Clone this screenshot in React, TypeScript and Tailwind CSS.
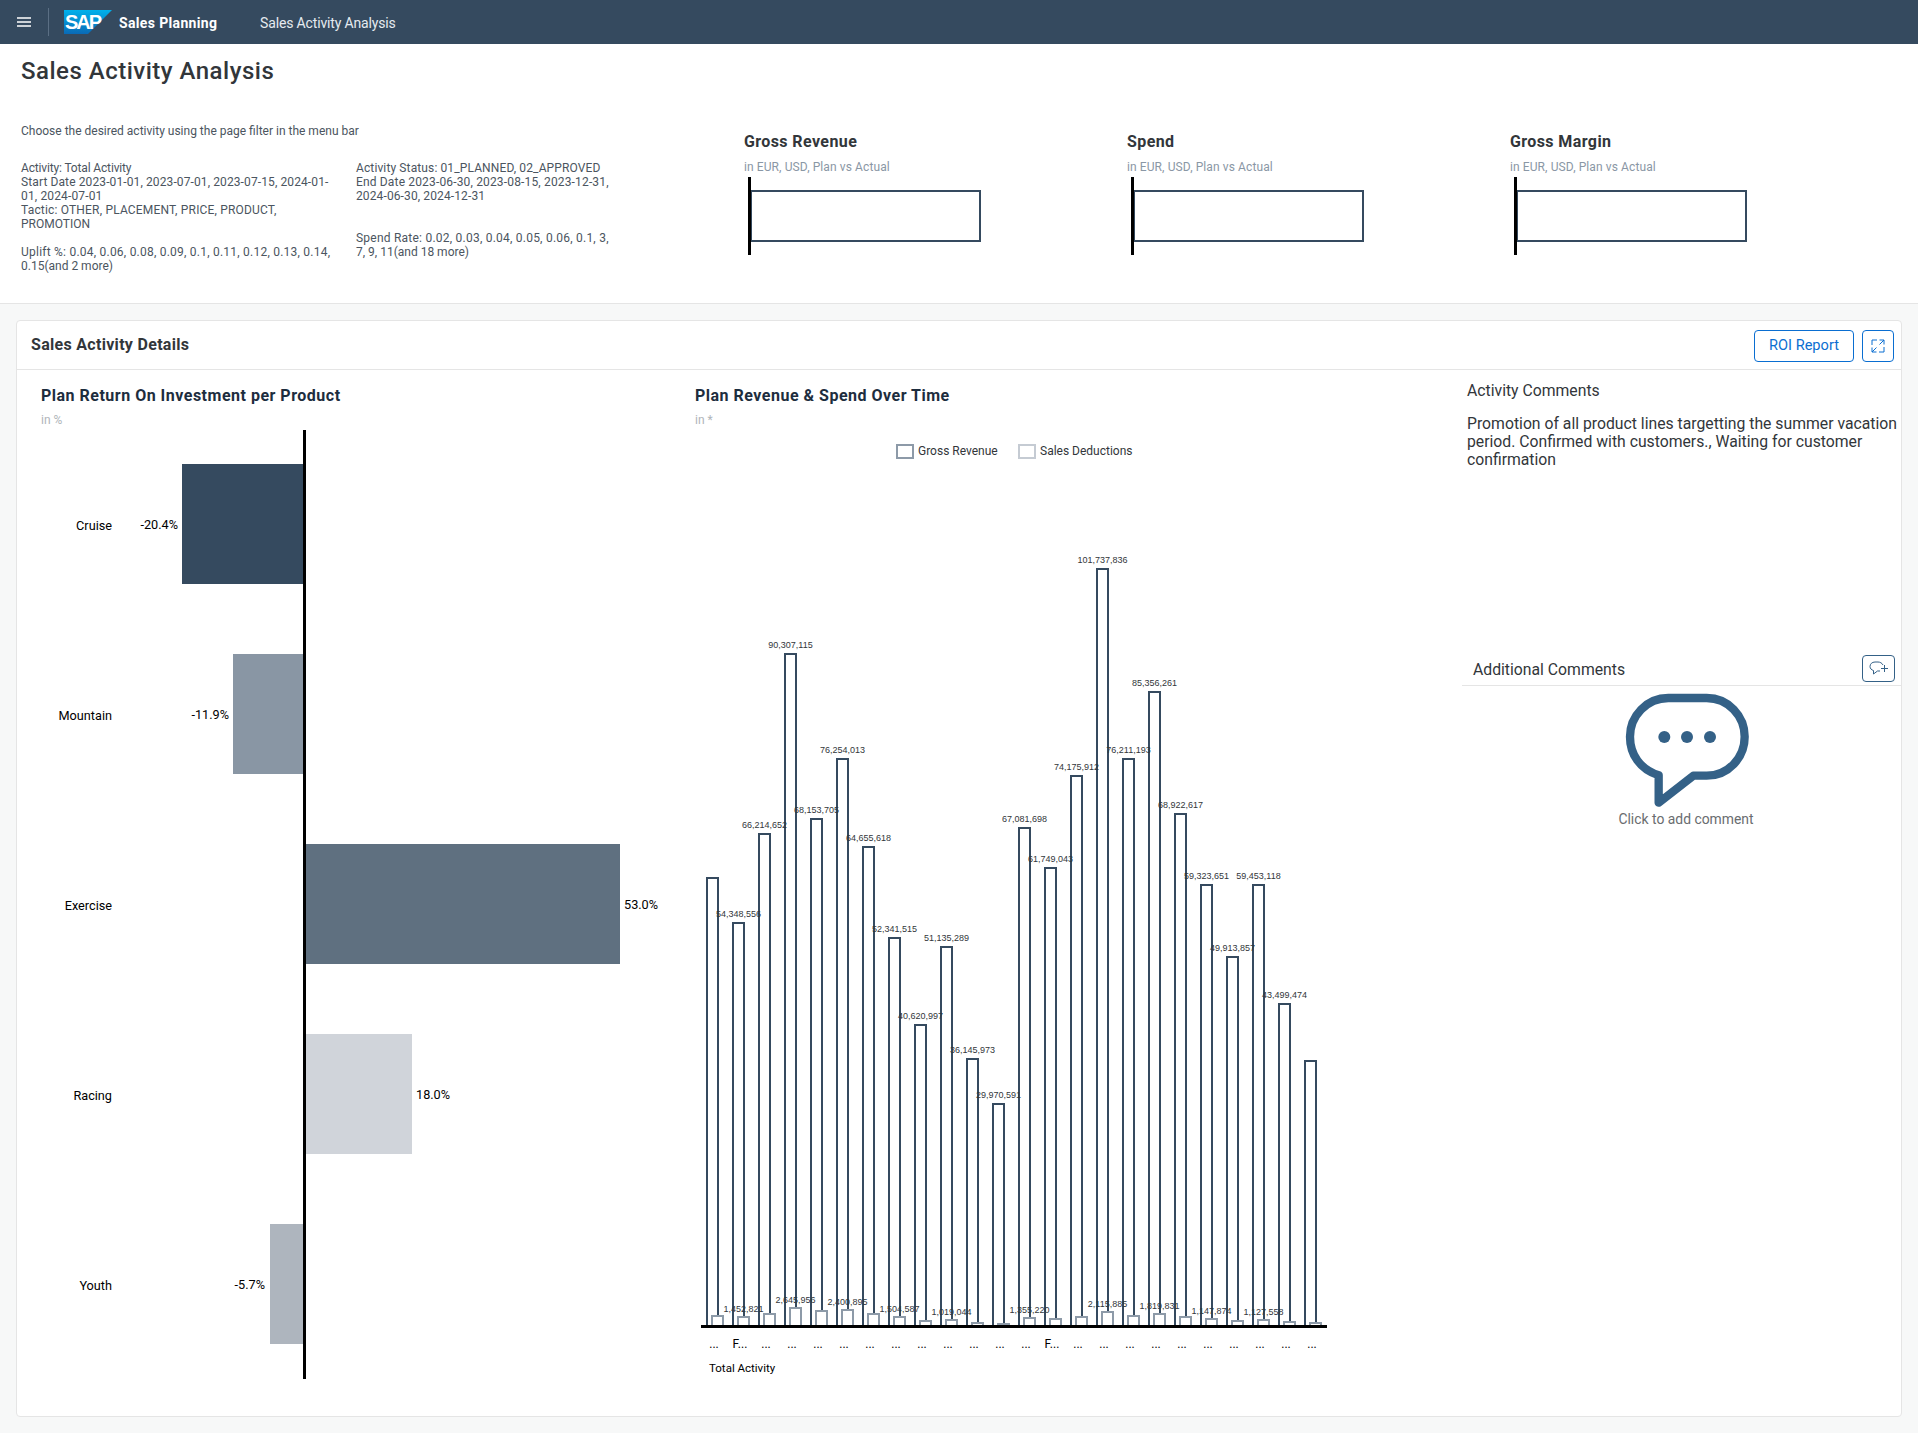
import React from "react";

const big = [877, 922, 833, 653, 818, 758, 846, 937, 1024, 946, 1058, 1103, 827, 867, 775, 568, 758, 691, 813, 884, 956, 884, 1003, 1060];
const small = [1315, 1316, 1313, 1307, 1310, 1309, 1313, 1316, 1320, 1319, 1322, 1323, 1317, 1318, 1316, 1311, 1315, 1313, 1316, 1318, 1320, 1319, 1321, 1322];
const bigLabels: (string | null)[] = [null, "54,348,556", "66,214,652", "90,307,115", "68,153,705", "76,254,013", "64,655,618", "52,341,515", "40,620,997", "51,135,289", "36,145,973", "29,970,591", "67,081,698", "61,749,043", "74,175,912", "101,737,836", "76,211,193", "85,356,261", "68,922,617", "59,323,651", "49,913,857", "59,453,118", "43,499,474", null];
const smallLabels: Record<number, string> = { 1: "1,452,821", 3: "2,645,956", 5: "2,400,895", 7: "1,504,587", 9: "1,019,044", 12: "1,355,220", 15: "2,115,885", 17: "1,819,831", 19: "1,147,874", 21: "1,127,558" };

const ui = "Roboto, sans-serif";
const arial = "'Liberation Sans', Arial, sans-serif";

function RevenueChart() {
  return (
    <svg width={773} height={940} viewBox="694 440 773 940" className="block">
      <rect x={897} y={444} width={16} height={13} fill="#fff" stroke="#8d9aa8" strokeWidth={2} />
      <text x={918} y={454} fontSize={12} fill="#32363a" fontFamily={ui}>Gross Revenue</text>
      <rect x={1019} y={444} width={16} height={13} fill="#fff" stroke="#c5cbd3" strokeWidth={2} />
      <text x={1040} y={454} fontSize={12} fill="#32363a" fontFamily={ui}>Sales Deductions</text>
      {big.map((top, i) => (
        <rect key={i} x={707 + 26 * i} y={top} width={11} height={1325 - top} fill="#fff" stroke="#354a5f" strokeWidth={2} />
      ))}
      {small.map((top, i) => (
        <rect key={i} x={712 + 26 * i} y={top} width={11} height={1325 - top} fill="#fff" stroke="#8d9aa8" strokeWidth={2} />
      ))}
      <rect x={701} y={1324} width={626} height={3} fill="#000" />
      {bigLabels.map((l, i) =>
        l ? (
          <text key={i} x={712.5 + 26 * i} y={big[i] - 6} fontSize={9} textAnchor="middle" fill="#32363a" fontFamily={arial}>{l}</text>
        ) : null
      )}
      {Object.entries(smallLabels).map(([k, l]) => (
        <text key={k} x={717.5 + 26 * Number(k)} y={small[Number(k)] - 5} fontSize={9} textAnchor="middle" fill="#32363a" fontFamily={arial}>{l}</text>
      ))}
      {big.map((_, i) => (
        <text key={i} x={714 + 26 * i} y={1347} fontSize={12} textAnchor="middle" fill="#000" fontFamily={ui}>{i === 1 || i === 13 ? "F..." : "..."}</text>
      ))}
      <text x={709} y={1371} fontSize={11.5} fill="#000" fontFamily={ui}>Total Activity</text>
    </svg>
  );
}

const roi = [
  { name: "Cruise", value: "-20.4%", x: 182, w: 122, y: 463, c: "#354a5f", vx: 178, a: "end" },
  { name: "Mountain", value: "-11.9%", x: 233, w: 71, y: 653, c: "#8996a4", vx: 229, a: "end" },
  { name: "Exercise", value: "53.0%", x: 306, w: 314, y: 843, c: "#5f7080", vx: 624, a: "start" },
  { name: "Racing", value: "18.0%", x: 306, w: 106, y: 1033, c: "#d0d4da", vx: 416, a: "start" },
  { name: "Youth", value: "-5.7%", x: 270, w: 34, y: 1223, c: "#aeb5be", vx: 265, a: "end" },
];

function RoiChart() {
  return (
    <svg width={660} height={950} viewBox="17 429 660 950" className="block">
      {roi.map((r) => (
        <g key={r.name}>
          <rect x={r.x} y={r.y} width={r.w} height={120} fill={r.c} />
          <text x={112} y={r.y + 66} fontSize={12.7} textAnchor="end" fill="#000" fontFamily={ui}>{r.name}</text>
          <text x={r.vx} y={r.y + 65} fontSize={12.7} textAnchor={r.a as "end" | "start"} fill="#000" fontFamily={ui}>{r.value}</text>
        </g>
      ))}
      <rect x={303} y={429} width={3} height={949} fill="#000" />
    </svg>
  );
}

function Kpi({ title }: { title: string }) {
  return (
    <div className="w-[383px] shrink-0">
      <div className="h-[20px] text-[16px] leading-[20px] font-bold tracking-[0.4px] text-[#32363a]">{title}</div>
      <div className="mt-[8px] h-[14px] text-[12px] leading-[14px] tracking-[0.1px] text-[#8a97a5]">in EUR, USD, Plan vs Actual</div>
      <svg width={240} height={78} viewBox="0 0 240 78" className="mt-[3px] block">
        <rect x={7} y={14} width={229} height={50} fill="#fff" stroke="#354a5f" strokeWidth={2} />
        <rect x={4} y={0} width={3} height={78} fill="#000" />
      </svg>
    </div>
  );
}

function Line({ children, className = "" }: { children: React.ReactNode; className?: string }) {
  return <div className={`h-[14px] whitespace-nowrap ${className}`}>{children}</div>;
}

export default function App() {
  return (
    <div className="flex h-[1433px] w-full flex-col bg-[#f7f8f8] text-[#32363a] [font-family:Roboto,sans-serif]">
      <header className="flex h-[44px] shrink-0 items-center bg-[#354a5f] text-white">
        <svg width={14} height={10} viewBox="0 0 14 10" className="ml-[17px] block">
          <path d="M0 1h14M0 5h14M0 9h14" stroke="#fff" strokeWidth={1.6} />
        </svg>
        <div className="ml-[17px] h-[28px] w-px bg-[#5b6f84]" />
        <svg width={48} height={24} viewBox="0 0 48 24" className="ml-[15px] block">
          <defs>
            <linearGradient id="sap" x1="0" y1="0" x2="0" y2="1">
              <stop offset="0" stopColor="#00b1eb" />
              <stop offset="1" stopColor="#0a6ab6" />
            </linearGradient>
          </defs>
          <polygon points="0,0 48,0 24,24 0,24" fill="url(#sap)" />
          <text x={1} y={19} fontSize={20} fontWeight={700} letterSpacing={-2} fill="#fff" fontFamily={arial}>SAP</text>
        </svg>
        <span className="ml-[7px] w-[141px] pt-[2px] text-[14px] font-bold tracking-[0.35px]">Sales Planning</span>
        <span className="pt-[2px] text-[14px] tracking-[-0.15px] text-[#e5eaf0]">Sales Activity Analysis</span>
      </header>

      <section className="flex h-[260px] shrink-0 border-b border-[#e5e5e5] bg-white">
        <div className="w-[744px] shrink-0 pl-[21px]">
          <h1 className="mt-[11px] h-[32px] text-[24px] leading-[32px] font-medium tracking-[0.5px] text-[#32363a]">Sales Activity Analysis</h1>
          <p className="mt-[37px] h-[14px] text-[12px] leading-[14px] text-[#4b5560]">Choose the desired activity using the page filter in the menu bar</p>
          <div className="mt-[23px] flex text-[12px] leading-[14px] text-[#4b5560]">
            <div className="w-[335px]">
              <Line className="tracking-[-0.15px]">Activity: Total Activity</Line>
              <Line className="tracking-[0.11px]">Start Date 2023-01-01, 2023-07-01, 2023-07-15, 2024-01-</Line>
              <Line className="tracking-[0.15px]">01, 2024-07-01</Line>
              <Line className="tracking-[0.18px]">Tactic: OTHER, PLACEMENT, PRICE, PRODUCT,</Line>
              <Line>PROMOTION</Line>
              <Line>{"\u00a0"}</Line>
              <Line className="tracking-[0.23px]">Uplift %: 0.04, 0.06, 0.08, 0.09, 0.1, 0.11, 0.12, 0.13, 0.14,</Line>
              <Line>0.15(and 2 more)</Line>
            </div>
            <div>
              <Line className="tracking-[0.12px]">Activity Status: 01_PLANNED, 02_APPROVED</Line>
              <Line className="tracking-[0.16px]">End Date 2023-06-30, 2023-08-15, 2023-12-31,</Line>
              <Line className="tracking-[0.12px]">2024-06-30, 2024-12-31</Line>
              <Line>{"\u00a0"}</Line>
              <Line>{"\u00a0"}</Line>
              <Line className="tracking-[0.23px]">Spend Rate: 0.02, 0.03, 0.04, 0.05, 0.06, 0.1, 3,</Line>
              <Line>7, 9, 11(and 18 more)</Line>
            </div>
          </div>
        </div>
        <div className="flex pt-[88px]">
          <Kpi title="Gross Revenue" />
          <Kpi title="Spend" />
          <Kpi title="Gross Margin" />
        </div>
      </section>

      <main className="mx-4 mt-4 flex h-[1097px] flex-col rounded-[4px] border border-[#e5e5e5] bg-white">
        <div className="flex h-[49px] shrink-0 items-center justify-between border-b border-[#e5e5e5] pr-[7px] pl-[14px]">
          <h2 className="mb-[1px] text-[16px] font-bold tracking-[0.3px] text-[#32363a]">Sales Activity Details</h2>
          <div className="mt-px flex gap-2">
            <button className="h-[32px] w-[100px] rounded-[4px] border border-[#0a6ed1] text-[14.6px] text-[#0a6ed1]">ROI Report</button>
            <button className="flex h-[32px] w-[32px] items-center justify-center rounded-[4px] border border-[#0a6ed1]">
              <svg width={14} height={14} viewBox="0 0 14 14" fill="none" stroke="#0a6ed1" strokeWidth={1}>
                <path d="M1 6V1h5M8.500 1H13v4.500M13 1 8.500 5.500M1 8.500V13h4.500M1 13l4.500-4.500M13 8v5H8" />
              </svg>
            </button>
          </div>
        </div>
        <div className="flex min-h-0 flex-1">
          <div className="w-[677px] shrink-0">
            <div className="h-[60px] pt-[16px] pl-[24px]">
              <h3 className="h-[20px] text-[16px] leading-[20px] font-bold tracking-[0.5px] text-[#1d2d3e]">Plan Return On Investment per Product</h3>
              <div className="mt-[7px] text-[12px] leading-[14px] text-[#b0b5ba]">in %</div>
            </div>
            <RoiChart />
          </div>
          <div className="w-[773px] shrink-0">
            <div className="h-[71px] pt-[16px]">
              <h3 className="h-[20px] pl-px text-[16px] leading-[20px] font-bold tracking-[0.5px] text-[#1d2d3e]">Plan Revenue &amp; Spend Over Time</h3>
              <div className="mt-[7px] pl-px text-[12px] leading-[14px] text-[#b0b5ba]">in *</div>
            </div>
            <RevenueChart />
          </div>
          <div className="min-w-0 flex-1 pt-[11px]">
            <div className="text-[15.75px] leading-[20px] text-[#32363a]">Activity Comments</div>
            <div className="mt-[14px] h-[240px] text-[15.75px] leading-[18px] text-[#32363a]">
              <div className="whitespace-nowrap">Promotion of all product lines targetting the summer vacation</div>
              <div className="whitespace-nowrap">period. Confirmed with customers., Waiting for customer</div>
              <div>confirmation</div>
            </div>
            <div className="-ml-[5px] flex h-[31px] items-center justify-between border-b border-[#e5e5e5] pr-[6px] pl-[11px]">
              <span className="text-[15.75px] text-[#32363a]">Additional Comments</span>
              <button className="mb-[3px] flex h-[27px] w-[33px] items-center justify-center rounded-[4px] border border-[#346187]">
                <svg width={20} height={15} viewBox="0 0 20 15" fill="none" stroke="#346187" strokeWidth={1}>
                  <path d="M14 4C13 2 11 1 9 1H6C3 1 1 3 1 5.500C1 7.500 2.500 9 4.500 9.500V13L8.500 10H11M12 7.500h7M15.500 4v7" />
                </svg>
              </button>
            </div>
            <div className="flex flex-col items-center pl-[11px]">
              <svg width={130} height={120} viewBox="519 150 390 360" className="mt-[5px] ml-[-3px] block">
                <path d="M626 485V403C570 385 540 340 540 287C540 225 590 171 655 171H770C835 171 884 225 884 287C884 350 835 404 770 404H730Z" fill="none" stroke="#346187" strokeWidth={25} strokeLinejoin="round" />
                <circle cx={643} cy={288} r={18} fill="#346187" />
                <circle cx={711} cy={288} r={18} fill="#346187" />
                <circle cx={780} cy={288} r={18} fill="#346187" />
              </svg>
              <div className="mr-[7px] text-[13.9px] leading-[16px] text-[#6a6d70]">Click to add comment</div>
            </div>
          </div>
        </div>
      </main>
    </div>
  );
}
